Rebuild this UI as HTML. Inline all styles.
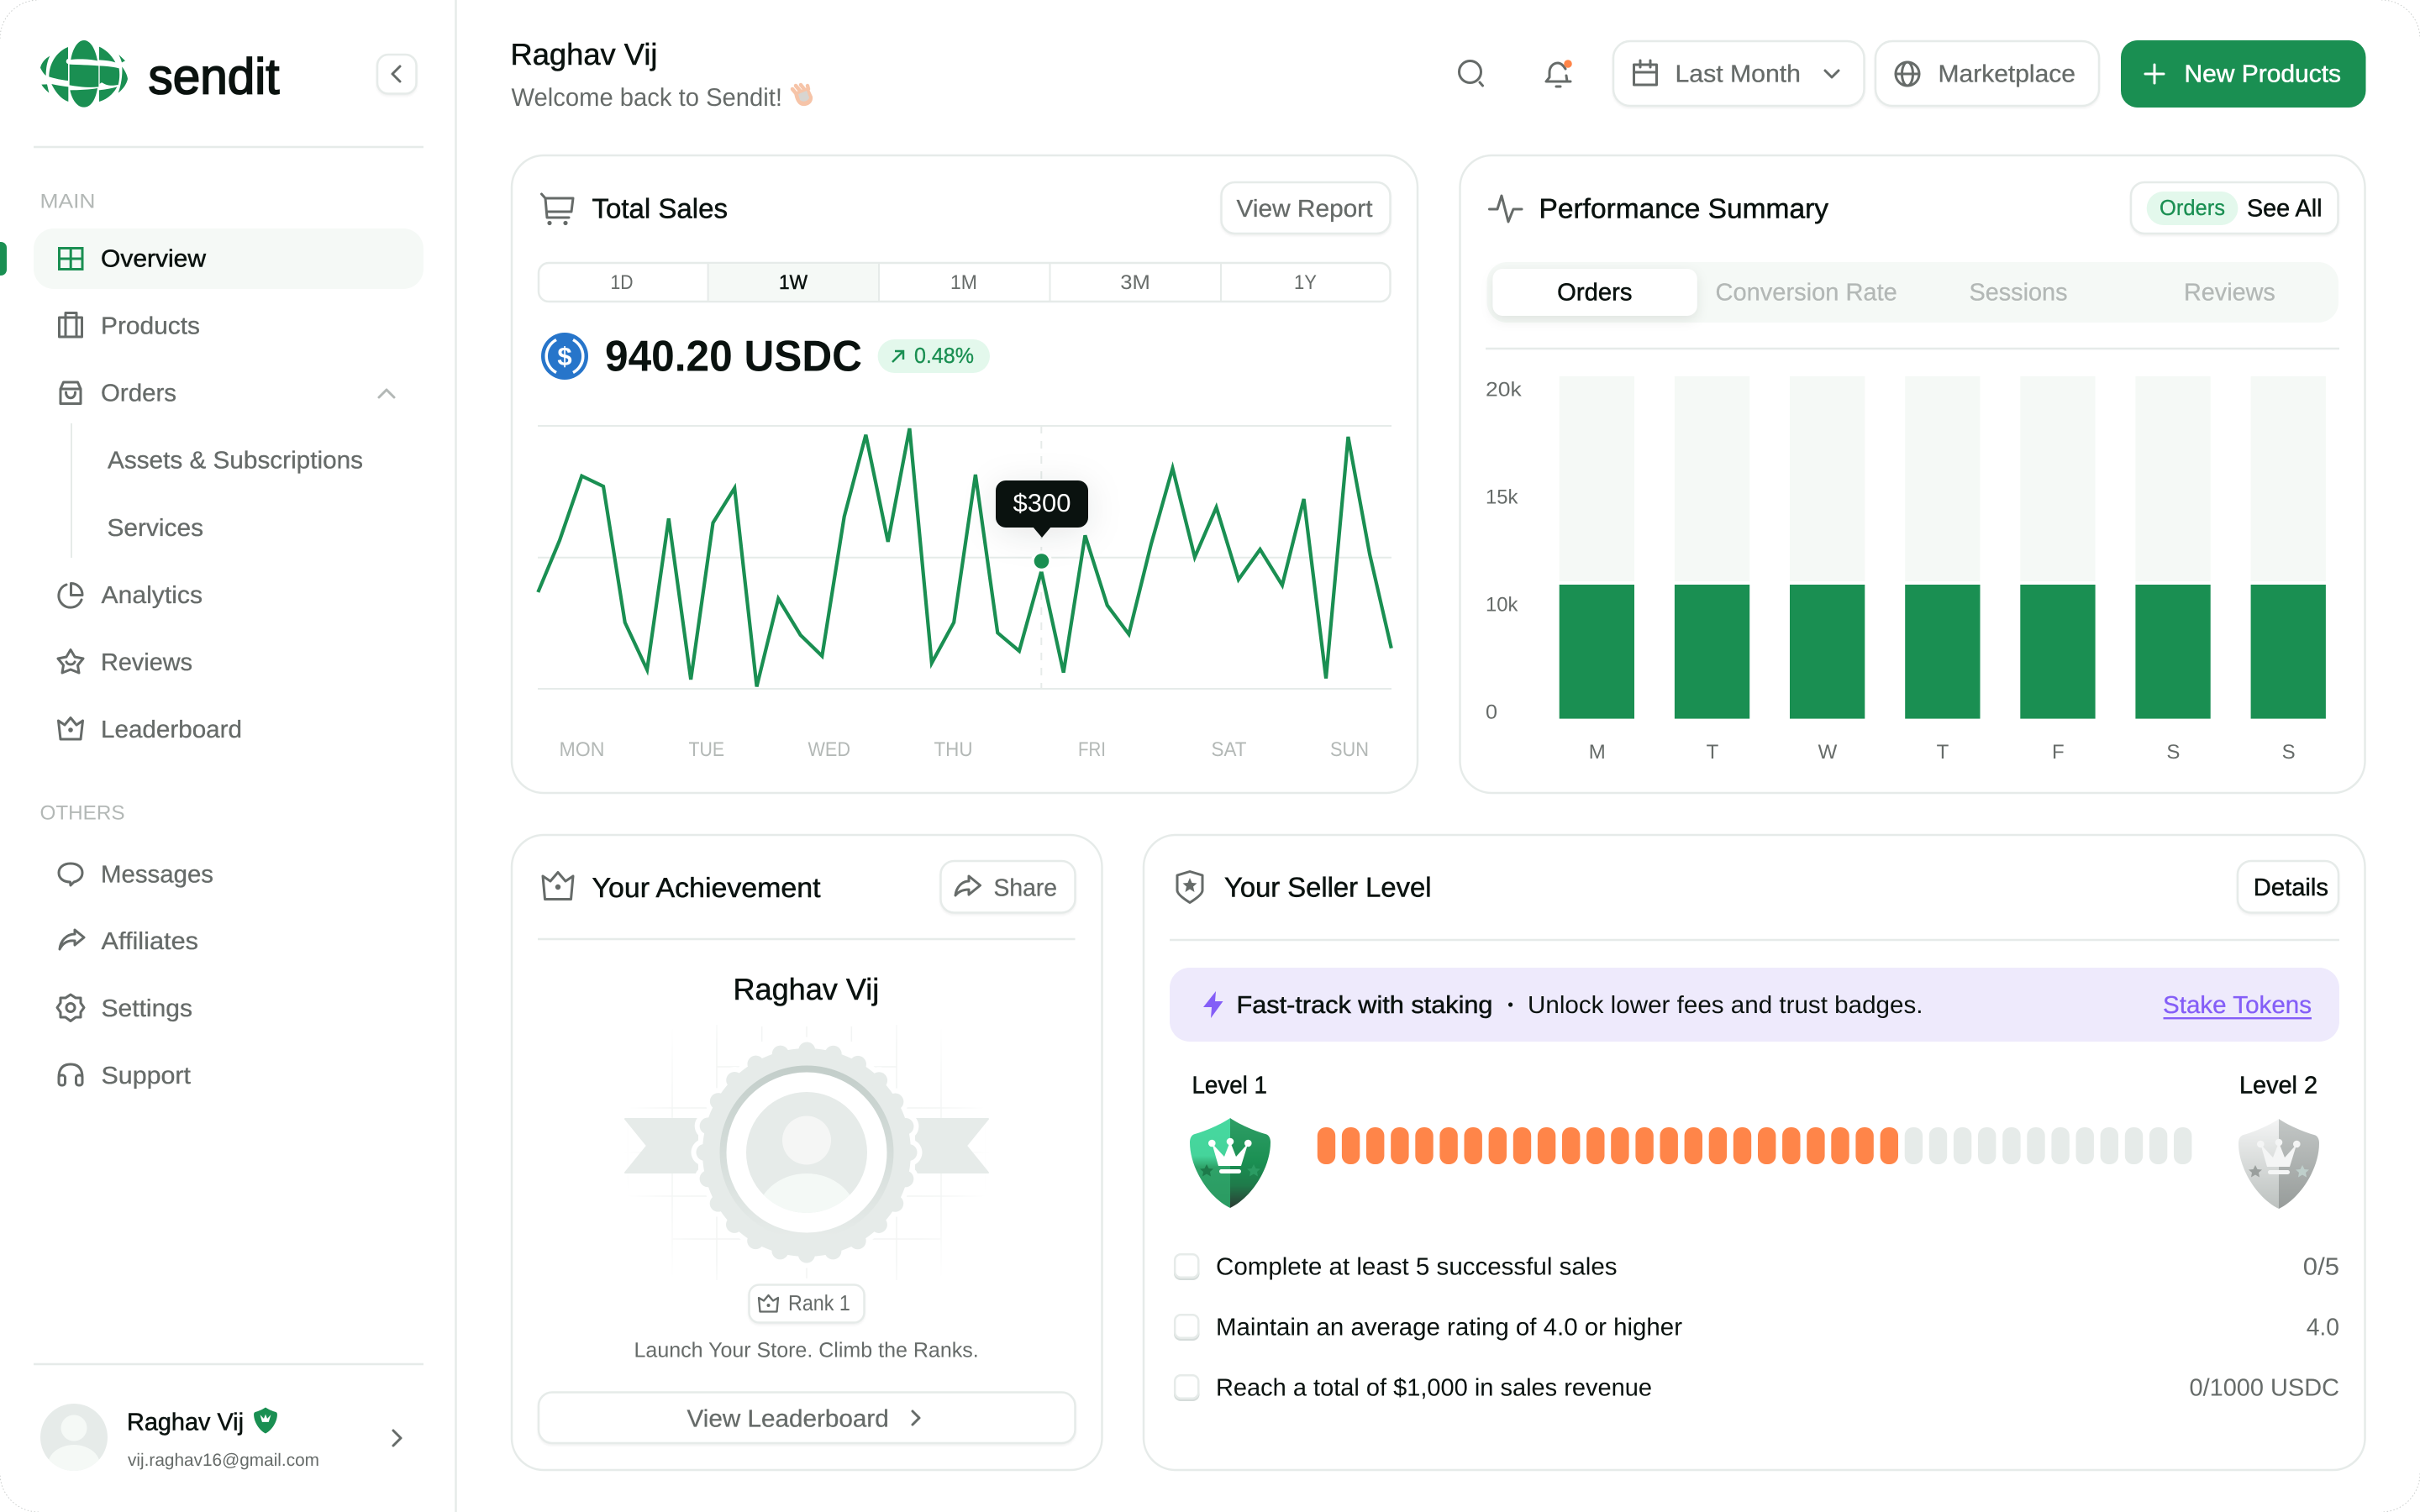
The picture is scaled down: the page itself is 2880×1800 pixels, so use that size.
<!DOCTYPE html>
<html lang="en">
<head>
<meta charset="utf-8">
<title>Sendit Dashboard</title>
<style>
html,body{margin:0;padding:0;background:#fff;width:2880px;height:1800px;overflow:hidden}
svg{display:block}
text{font-family:"Liberation Sans",sans-serif;font-size:29px;fill:#666b69;text-rendering:geometricPrecision}
.d{fill:#0a120f}
.g{fill:#666b69}
.l{fill:#b3b8b6}
.m{stroke:currentColor;stroke-width:.45px}
.dm{fill:#0a120f;stroke:#0a120f;stroke-width:.5px}
.gm{fill:#666b69;stroke:#666b69;stroke-width:.3px}
.t{font-size:33px}
.card{fill:#fff;stroke:#e6ebe9;stroke-width:2.5}
.btn{fill:#fff;stroke:#e6ebe9;stroke-width:2.5;filter:drop-shadow(0 2px 1px rgba(10,18,15,.05))}
.i{fill:none;stroke:#666b69;stroke-width:3;stroke-linejoin:round;stroke-linecap:round}
.sep{stroke:#e6ebe9;stroke-width:2.5}
.s24{font-size:24px}
.s26{font-size:26px}
.o{fill:#ff8549}
.e{fill:#e6ebe9}
</style>
</head>
<body>
<svg width="2880" height="1800" viewBox="0 0 2880 1800" xmlns="http://www.w3.org/2000/svg">
<defs>
<linearGradient id="lg1" x1="0" y1="0" x2="0" y2="1"><stop offset="0" stop-color="#47d9a0"/><stop offset=".42" stop-color="#45d49b"/><stop offset=".55" stop-color="#2ea268"/><stop offset="1" stop-color="#2a9a61"/></linearGradient>
<linearGradient id="lg2" x1="0" y1="0" x2="0" y2="1"><stop offset="0" stop-color="#2f9e66"/><stop offset=".5" stop-color="#1a8f52"/><stop offset=".75" stop-color="#1f7a4a"/><stop offset="1" stop-color="#2b3b34"/></linearGradient>
<linearGradient id="lg3" x1="0" y1="0" x2="0" y2="1"><stop offset="0" stop-color="#f4f5f5"/><stop offset="1" stop-color="#bcc1bf"/></linearGradient>
<linearGradient id="lg4" x1="0" y1="0" x2="0" y2="1"><stop offset="0" stop-color="#c3c7c6"/><stop offset="1" stop-color="#979c9a"/></linearGradient>
<linearGradient id="ring" x1="0" y1="0" x2="0" y2="1"><stop offset="0" stop-color="#c3ceca"/><stop offset="1" stop-color="#e6ebe9"/></linearGradient>
<radialGradient id="fade" gradientUnits="userSpaceOnUse" cx="960" cy="1372" r="220"><stop offset="0" stop-color="#eef1f0"/><stop offset=".75" stop-color="#f3f5f4"/><stop offset="1" stop-color="#ffffff"/></radialGradient>
<clipPath id="avc"><circle cx="960" cy="1372" r="72"/></clipPath>
<clipPath id="avc2"><circle cx="88" cy="1711" r="40"/></clipPath>
</defs>

<!-- window corners -->
<path d="M0 46A46 46 0 0 1 46 0M2834 0A46 46 0 0 1 2880 46M2880 1754A46 46 0 0 1 2834 1800M46 1800A46 46 0 0 1 0 1754" fill="none" stroke="#c9cccb" stroke-width="1" stroke-dasharray="1.5 2.5"/>

<!-- SIDEBAR -->
<line x1="542.5" y1="0" x2="542.5" y2="1800" stroke="#e6ebe9" stroke-width="2.5"/>
<g fill="#1a8f52" transform="translate(20 20) scale(.3333)">
<path d="M240 84C265 84 282 120 288 157C260 150 215 150 193 153C198 120 215 84 240 84Z"/>
<path d="M188 170C220 172 260 172 292 175L292 250C258 254 220 250 188 244Z"/>
<path d="M190 262C220 262 260 260 288 255C282 295 265 323 240 323C215 323 197 295 190 262Z"/>
<path d="M183 108L183 150C174 153 174 166 183 168L183 228C160 226 135 220 115 214C115 170 140 125 183 108Z"/>
<path d="M118 140C100 150 88 165 84 182C90 195 97 205 104 210C104 185 108 160 118 140Z"/>
<path d="M124 240C145 245 165 248 184 250L184 303C160 295 138 270 124 240Z"/>
<path d="M88 242L108 241L115 272C103 262 94 252 88 242Z"/>
<path d="M294 107C320 118 340 140 352 163C335 158 315 155 294 154Z"/>
<path d="M364 135L387 157L375 163C372 153 368 143 364 135Z"/>
<path d="M296 175C320 176 345 179 365 184C368 205 367 225 362 243C345 246 325 248 308 237C302 233 300 236 296 240Z"/>
<path d="M376 178C388 195 395 210 396 222C392 240 380 258 362 272C372 245 378 210 376 178Z"/>
<path d="M294 262C315 260 340 255 358 250C345 275 322 295 294 303Z"/>
</g>
<text x="176.5" y="111.5" textLength="156" lengthAdjust="spacingAndGlyphs" style="font-size:60px;fill:#0a120f;stroke:#0a120f;stroke-width:1.7px">sendit</text>
<rect class="btn" x="449" y="65" width="46.5" height="46.5" rx="13"/>
<path class="i" d="M476 79L467 88L476 97"/>
<line class="sep" x1="40" y1="175" x2="504" y2="175"/>

<text x="47.5" y="247.5" textLength="66" lengthAdjust="spacingAndGlyphs" class="l s24">MAIN</text>
<path d="M0 288H1A7 7 0 0 1 8 295V321A7 7 0 0 1 1 328H0Z" fill="#1a8f52"/>
<rect x="40" y="272" width="464" height="72" rx="24" fill="#f5f9f6"/>
<g fill="none" stroke="#1a8f52" stroke-width="3"><rect x="70.5" y="295.5" width="27.5" height="25"/><path d="M84.2 295.5V320.5M70.5 308H98"/></g>
<text x="120" y="317.5" textLength="125" lengthAdjust="spacingAndGlyphs" class="dm">Overview</text>

<g class="i"><rect x="70.5" y="378" width="27" height="23"/><path d="M78 401V372.5H91V401"/></g>
<text x="120" y="397.5" textLength="118" lengthAdjust="spacingAndGlyphs" class="gm">Products</text>

<g class="i"><path d="M72 463L75.5 455H92.5L96 463V480.5H72ZM72 463H96"/><path d="M78.5 467C78.5 476 89.5 476 89.5 467"/></g>
<text x="120" y="477.5" textLength="90" lengthAdjust="spacingAndGlyphs" class="gm">Orders</text>
<path d="M451 473L460 464L469 473" fill="none" stroke="#b3b8b6" stroke-width="3" stroke-linecap="round" stroke-linejoin="round"/>

<line x1="85" y1="504" x2="85" y2="664" stroke="#e6ebe9" stroke-width="2"/>
<text x="128" y="557.5" textLength="304" lengthAdjust="spacingAndGlyphs" class="gm">Assets &amp; Subscriptions</text>
<text x="127.5" y="638" textLength="114.5" lengthAdjust="spacingAndGlyphs" class="gm">Services</text>

<g class="i"><path d="M84.5 694.5V708.5H98A13.5 13.5 0 0 0 84.5 694.5Z"/><path d="M79 696A14 14 0 1 0 97 714"/></g>
<text x="120.5" y="718" textLength="120.5" lengthAdjust="spacingAndGlyphs" class="gm">Analytics</text>

<g class="i"><path d="M84 773.5L89 782L99 784L92.5 792L94 801L84 797L74 801L75.5 792L69 784L79 782Z"/><path d="M79 788C81 792 87 792 89 788"/></g>
<text x="120" y="798" textLength="109" lengthAdjust="spacingAndGlyphs" class="gm">Reviews</text>

<g class="i"><path d="M84 854.5L91 863L98.5 858L96 880H72L69.5 858L77 863Z"/></g>
<circle cx="84" cy="869" r="2.8" fill="#666b69"/>
<text x="120" y="878" textLength="168" lengthAdjust="spacingAndGlyphs" class="gm">Leaderboard</text>

<text x="47.5" y="975.5" textLength="101" lengthAdjust="spacingAndGlyphs" class="l s24">OTHERS</text>

<g class="i"><path d="M84 1028C93 1028 98 1033 98 1039C98 1046 92 1049 88 1050L84 1054L83.5 1050C76 1050 70 1046 70 1039C70 1033 75 1028 84 1028Z"/></g>
<text x="120" y="1050.5" textLength="134" lengthAdjust="spacingAndGlyphs" class="gm">Messages</text>

<g class="i"><path d="M89 1107L100 1116L89 1125V1120C81 1119 75 1122 71 1130C72 1120 79 1112 89 1112Z"/></g>
<text x="120.5" y="1130" textLength="115.5" lengthAdjust="spacingAndGlyphs" class="gm">Affiliates</text>

<g class="i"><path d="M84 1184L90 1188H96V1194L100 1199.5L96 1205V1211H90L84 1215.5L78 1211H72V1205L68 1199.5L72 1194V1188H78Z"/><circle cx="84" cy="1199.5" r="5"/></g>
<text x="120.5" y="1210" textLength="108.5" lengthAdjust="spacingAndGlyphs" class="gm">Settings</text>

<g class="i"><path d="M70 1283C70 1272 75 1267 84 1267C93 1267 98 1272 98 1283"/><rect x="70" y="1280" width="7.5" height="12" rx="3"/><rect x="90.5" y="1280" width="7.5" height="12" rx="3"/></g>
<text x="120.5" y="1290" textLength="106.5" lengthAdjust="spacingAndGlyphs" class="gm">Support</text>

<line class="sep" x1="40" y1="1624" x2="504" y2="1624"/>
<circle cx="88" cy="1711" r="40" fill="#e6ebe9"/>
<g clip-path="url(#avc2)" fill="#f5f9f6"><circle cx="88" cy="1700" r="15.5"/><ellipse cx="88" cy="1744" rx="31" ry="24"/></g>
<text x="151" y="1702.5" textLength="139" lengthAdjust="spacingAndGlyphs" class="dm">Raghav Vij</text>
<g transform="translate(316 1675.5) scale(.29)">
<path d="M0 0C10 7 28 15 42 19C46 20 48 24 48 29C48 60 25 95 0 107C-25 95 -48 60 -48 29C-48 24 -46 20 -42 19C-28 15 -10 7 0 0Z" fill="#1a8f52"/>
<path d="M-22 30L-7 46L0 28L7 46L22 30L13 60H-14Z" fill="#fff"/>
</g>
<text x="152" y="1745" textLength="228" lengthAdjust="spacingAndGlyphs" style="font-size:21px">vij.raghav16@gmail.com</text>
<path class="i" d="M468 1703L477 1712L468 1721"/>

<!-- HEADER -->
<text x="607.5" y="77" textLength="175" lengthAdjust="spacingAndGlyphs" class="dm" style="font-size:36px">Raghav Vij</text>
<text x="608.5" y="126" textLength="322.5" lengthAdjust="spacingAndGlyphs" style="font-size:30px">Welcome back to Sendit!</text>
<g stroke="#f6c4a8" stroke-width="4.5" stroke-linecap="round" fill="none">
<path d="M948 112L943 106M952 108L947 102M957 106L953 101M962 106L961 102"/>
</g>
<path d="M945 110L962 104L967 115C968 122 962 127 955 126C949 125 946 118 945 110Z" fill="#f6c4a8"/>
<path d="M950 112L960 108L963 116C962 121 955 122 952 119Z" fill="#d8d5d1"/>

<circle class="i" cx="1749.5" cy="85.5" r="13"/>
<path class="i" d="M1761 98L1764.5 102"/>

<g class="i"><path d="M1863 82C1860 77 1857 75 1854 75C1848 75 1844 80 1844 86V92L1840 97H1869M1865 97L1864 90"/><path d="M1852 103H1857"/></g>
<circle cx="1866" cy="76" r="4.8" fill="#ff8549"/>

<rect class="btn" x="1920" y="49" width="298.5" height="77" rx="20"/>
<g class="i"><rect x="1944.5" y="77" width="27" height="24"/><path d="M1944.5 86H1971.5M1952 72V80M1964 72V80"/></g>
<text x="1993.5" y="97.7" textLength="149.5" lengthAdjust="spacingAndGlyphs" class="gm">Last Month</text>
<path class="i" d="M2172 84L2180 92L2188 84"/>

<rect class="btn" x="2232" y="49" width="266" height="77" rx="20"/>
<g class="i"><circle cx="2270" cy="88" r="14"/><ellipse cx="2270" cy="88" rx="6.5" ry="14"/><path d="M2256 88H2284"/></g>
<text x="2306.5" y="97.7" textLength="163.5" lengthAdjust="spacingAndGlyphs" class="gm">Marketplace</text>

<rect x="2524" y="48" width="291.5" height="80" rx="20" fill="#1a8f52"/>
<path d="M2564 77V99M2553 88H2575" stroke="#fff" stroke-width="3" stroke-linecap="round"/>
<text x="2599.5" y="97.7" textLength="186.5" lengthAdjust="spacingAndGlyphs" style="fill:#fff;stroke:#fff;stroke-width:.5px">New Products</text>

<!-- TOTAL SALES -->
<rect class="card" x="609" y="185" width="1078" height="759" rx="38"/>
<g class="i"><path d="M644.5 231L649 236L651 259H677"/><path d="M649 236H682L680 252H651"/></g>
<circle cx="654" cy="265.5" r="2.6" fill="#666b69"/><circle cx="673" cy="265.5" r="2.6" fill="#666b69"/>
<text x="704.5" y="259.5" textLength="161.5" lengthAdjust="spacingAndGlyphs" class="dm t">Total Sales</text>
<rect class="btn" x="1453.5" y="217" width="201" height="61" rx="16"/>
<text x="1471.5" y="258" textLength="162" lengthAdjust="spacingAndGlyphs" class="gm">View Report</text>

<rect x="641" y="313" width="1013.5" height="46" rx="12" fill="#fff" stroke="#e6ebe9" stroke-width="2.5"/>
<rect x="842.6" y="314" width="203.4" height="44" fill="#f5f9f6"/>
<path d="M842.6 313V359M1046 313V359M1249.5 313V359M1453 313V359" stroke="#e6ebe9" stroke-width="2"/>
<g>
<text class="g s24" x="740" y="344" text-anchor="middle" textLength="27" lengthAdjust="spacingAndGlyphs">1D</text>
<text class="dm s24" x="944" y="344" text-anchor="middle" textLength="34" lengthAdjust="spacingAndGlyphs">1W</text>
<text class="g s24" x="1147" y="344" text-anchor="middle" textLength="32" lengthAdjust="spacingAndGlyphs">1M</text>
<text class="g s24" x="1351" y="344" text-anchor="middle" textLength="35.5" lengthAdjust="spacingAndGlyphs">3M</text>
<text class="g s24" x="1553.5" y="344" text-anchor="middle" textLength="27" lengthAdjust="spacingAndGlyphs">1Y</text>
</g>

<circle cx="672" cy="424" r="28" fill="#2775ca"/>
<path d="M662 404.5A22 22 0 0 0 662 443.5M682 404.5A22 22 0 0 1 682 443.5" fill="none" stroke="#fff" stroke-width="3.5"/>
<text x="672" y="435" text-anchor="middle" font-weight="700" style="font-size:31px;fill:#fff">$</text>
<text x="720" y="441.7" textLength="306" lengthAdjust="spacingAndGlyphs" font-weight="700" class="d" style="font-size:52px">940.20 USDC</text>
<rect x="1044.6" y="404" width="133.4" height="40" rx="20" fill="#e3f8ec"/>
<path d="M1062 431L1075 418M1065 418H1075V428" fill="none" stroke="#1a8f52" stroke-width="2.5"/>
<text x="1088" y="432" textLength="71" lengthAdjust="spacingAndGlyphs" class="s26" style="fill:#1a8f52;stroke:#1a8f52;stroke-width:.3px">0.48%</text>

<path d="M640 507H1656M640 663.7H1656M640 820H1656" stroke="#e6ebe9" stroke-width="2"/>
<line x1="1239.3" y1="507" x2="1239.3" y2="820" stroke="#e6ebe9" stroke-width="2" stroke-dasharray="9 9"/>
<polyline fill="none" stroke="#1a8f52" stroke-width="4.2" stroke-linejoin="miter" vector-effect="non-scaling-stroke" transform="translate(620 480) scale(.6761 .33333)" points="30,675 68,490 107,260 145,297 183,783 222,952 260,412 299,987 338,427 376,303 415,1012 453,698 492,828 530,903 569,405 607,113 646,495 684,90 723,928 762,783 800,255 839,820 877,885 916,600 955,962 993,472 1032,722 1070,825 1109,505 1147,232 1186,550 1224,372 1263,630 1301,522 1340,650 1378,342 1417,983 1456,120 1494,540 1532,875"/>
<circle cx="1239.5" cy="668" r="12.5" fill="#fff"/>
<circle cx="1239.5" cy="668" r="8.8" fill="#1a8f52"/>
<g style="filter:drop-shadow(0 6px 20px rgba(10,18,15,.10))">
<rect x="1185" y="572" width="110" height="56" rx="12" fill="#0a120f"/>
<path d="M1229 627H1251L1240 640Z" fill="#0a120f"/>
</g>
<text x="1205.5" y="609" textLength="69" lengthAdjust="spacingAndGlyphs" style="fill:#fff;font-size:30px">$300</text>
<g>
<text class="l s24" x="665.5" y="900" textLength="54" lengthAdjust="spacingAndGlyphs">MON</text>
<text class="l s24" x="819.5" y="900" textLength="42.5" lengthAdjust="spacingAndGlyphs">TUE</text>
<text class="l s24" x="961.5" y="900" textLength="50.5" lengthAdjust="spacingAndGlyphs">WED</text>
<text class="l s24" x="1111.5" y="900" textLength="46" lengthAdjust="spacingAndGlyphs">THU</text>
<text class="l s24" x="1283" y="900" textLength="33" lengthAdjust="spacingAndGlyphs">FRI</text>
<text class="l s24" x="1441.5" y="900" textLength="42" lengthAdjust="spacingAndGlyphs">SAT</text>
<text class="l s24" x="1583" y="900" textLength="46" lengthAdjust="spacingAndGlyphs">SUN</text>
</g>

<!-- PERFORMANCE -->
<rect class="card" x="1737.5" y="185" width="1077" height="759" rx="38"/>
<path class="i" d="M1772.5 249H1782L1787 233L1795 264L1801 249H1811"/>
<text x="1831.5" y="259.3" textLength="344.5" lengthAdjust="spacingAndGlyphs" class="dm t">Performance Summary</text>
<rect class="btn" x="2536" y="217" width="246.5" height="61" rx="16"/>
<rect x="2554.7" y="228" width="108.7" height="40" rx="20" fill="#e3f8ec"/>
<text x="2570" y="256" textLength="78" lengthAdjust="spacingAndGlyphs" class="s26" style="fill:#1a8f52;stroke:#1a8f52;stroke-width:.3px">Orders</text>
<text x="2674" y="257.7" textLength="89.5" lengthAdjust="spacingAndGlyphs" class="dm">See All</text>

<rect x="1769.5" y="312" width="1013.5" height="72" rx="24" fill="#f5f9f6"/>
<rect x="1776.4" y="320" width="243.4" height="56" rx="12" fill="#fff" style="filter:drop-shadow(0 5px 7px rgba(10,18,15,.09))"/>
<text x="1853.2" y="357.7" textLength="89.3" lengthAdjust="spacingAndGlyphs" class="dm">Orders</text>
<text x="2041.5" y="357.7" textLength="216.3" lengthAdjust="spacingAndGlyphs" class="l" style="stroke:#b3b8b6;stroke-width:.3px">Conversion Rate</text>
<text x="2343.5" y="357.7" textLength="117" lengthAdjust="spacingAndGlyphs" class="l" style="stroke:#b3b8b6;stroke-width:.3px">Sessions</text>
<text x="2599" y="357.7" textLength="108.8" lengthAdjust="spacingAndGlyphs" class="l" style="stroke:#b3b8b6;stroke-width:.3px">Reviews</text>
<line class="sep" x1="1768" y1="415" x2="2784" y2="415"/>

<g fill="#f5f9f6">
<rect x="1855.7" y="448" width="89.3" height="244"/><rect x="1992.9" y="448" width="89.3" height="244"/><rect x="2130" y="448" width="89.3" height="244"/><rect x="2267.2" y="448" width="89.3" height="244"/><rect x="2404.3" y="448" width="89.3" height="244"/><rect x="2541.4" y="448" width="89.3" height="244"/><rect x="2678.6" y="448" width="89.3" height="244"/>
</g>
<g fill="#1a8f52">
<rect x="1855.7" y="696" width="89.3" height="159.6"/><rect x="1992.9" y="696" width="89.3" height="159.6"/><rect x="2130" y="696" width="89.3" height="159.6"/><rect x="2267.2" y="696" width="89.3" height="159.6"/><rect x="2404.3" y="696" width="89.3" height="159.6"/><rect x="2541.4" y="696" width="89.3" height="159.6"/><rect x="2678.6" y="696" width="89.3" height="159.6"/>
</g>
<text class="s24" x="1768" y="471.3" textLength="42.7" lengthAdjust="spacingAndGlyphs">20k</text>
<text class="s24" x="1768" y="599.7" textLength="38.4" lengthAdjust="spacingAndGlyphs">15k</text>
<text class="s24" x="1768" y="727.5" textLength="38.4" lengthAdjust="spacingAndGlyphs">10k</text>
<text class="s24" x="1768" y="855.3" textLength="14" lengthAdjust="spacingAndGlyphs">0</text>
<text class="s24" x="1900.7" y="902.8" text-anchor="middle">M</text>
<text class="s24" x="2037.9" y="902.8" text-anchor="middle">T</text>
<text class="s24" x="2175" y="902.8" text-anchor="middle">W</text>
<text class="s24" x="2312" y="902.8" text-anchor="middle">T</text>
<text class="s24" x="2449.3" y="902.8" text-anchor="middle">F</text>
<text class="s24" x="2586.4" y="902.8" text-anchor="middle">S</text>
<text class="s24" x="2723.6" y="902.8" text-anchor="middle">S</text>

<!-- ACHIEVEMENT -->
<rect class="card" x="609" y="994" width="702.5" height="756" rx="38"/>
<g class="i"><path d="M664 1038.5L673 1049L682 1043L679.5 1070.5H648.5L646 1043L655 1049Z"/></g>
<circle cx="664" cy="1056" r="3.2" fill="#666b69"/>
<text x="704.5" y="1067.8" textLength="272" lengthAdjust="spacingAndGlyphs" class="dm t">Your Achievement</text>
<rect class="btn" x="1119.5" y="1025" width="160" height="61.5" rx="16"/>
<g class="i"><path d="M1153 1043L1166.5 1054L1153 1065V1059C1147 1059 1141 1061 1137 1066C1138 1056 1145 1049 1153 1049Z"/></g>
<text x="1182.5" y="1066.7" textLength="75.5" lengthAdjust="spacingAndGlyphs" class="gm">Share</text>
<line class="sep" x1="640" y1="1118" x2="1279.5" y2="1118"/>
<text x="872.5" y="1190" textLength="173.8" lengthAdjust="spacingAndGlyphs" class="dm" style="font-size:36px">Raghav Vij</text>

<!-- badge -->
<g fill="none" stroke="url(#fade)" stroke-width="1.5">
<path d="M747 1240V1503M800 1220V1524M853 1220V1524M1067 1220V1524M1120 1220V1524M1173 1240V1503M960 1222V1240M960 1504V1522M906.7 1222V1240M1013.3 1222V1240"/>
<path d="M740 1319H1180M740 1372H1180M740 1424H1180M800 1475H1120M853 1270H1067"/>
</g>
<path d="M744 1332H830V1396H744L770 1364Z" fill="#e6ebe9" stroke="#e6ebe9" stroke-width="2" stroke-linejoin="round"/>
<path d="M1176 1332H1090V1396H1176L1150 1364Z" fill="#e6ebe9" stroke="#e6ebe9" stroke-width="2" stroke-linejoin="round"/>
<circle cx="960" cy="1372" r="121.5" fill="none" stroke="#fff" stroke-width="32" stroke-linecap="round" stroke-dasharray="0 31.809"/>
<circle cx="960" cy="1372" r="130" fill="#fff"/>
<circle cx="960" cy="1372" r="124" fill="#e6ebe9"/>
<circle cx="960" cy="1372" r="121.5" fill="none" stroke="#e6ebe9" stroke-width="20" stroke-linecap="round" stroke-dasharray="0 31.809"/>
<circle cx="960" cy="1372" r="99.5" fill="#fff" stroke="url(#ring)" stroke-width="8"/>
<circle cx="960" cy="1372" r="72" fill="#e6ebe9"/>
<g clip-path="url(#avc)"><ellipse cx="960" cy="1357.5" rx="29" ry="29" fill="#f5f6f5"/><ellipse cx="960" cy="1450" rx="60" ry="53" fill="#f4f9f6"/></g>

<rect class="btn" x="891.5" y="1529.5" width="137" height="45" rx="12"/>
<g fill="none" stroke="#666b69" stroke-width="2.3" stroke-linejoin="round"><path d="M914.5 1542L920 1548.5L926 1545L924.5 1561.5H904.5L903 1545L909 1548.5Z"/></g>
<circle cx="914.5" cy="1554" r="2" fill="#666b69"/>
<text x="938" y="1560.2" textLength="73.8" lengthAdjust="spacingAndGlyphs" class="s26">Rank 1</text>
<text x="754.5" y="1615.7" textLength="410.2" lengthAdjust="spacingAndGlyphs" style="font-size:25px">Launch Your Store. Climb the Ranks.</text>
<rect class="btn" x="641" y="1657.5" width="638.5" height="60.5" rx="16"/>
<text x="817.5" y="1698.4" textLength="240.3" lengthAdjust="spacingAndGlyphs" class="gm">View Leaderboard</text>
<path class="i" d="M1086 1680L1094 1688L1086 1696"/>

<!-- SELLER LEVEL -->
<rect class="card" x="1361" y="994" width="1453.5" height="756" rx="38"/>
<g class="i"><path d="M1416 1037.5L1431 1042V1060C1431 1065 1420 1072 1416 1074.5C1412 1072 1401 1065 1401 1060V1042Z"/></g>
<polygon points="1416,1045 1418.5,1051 1424.5,1051.5 1420,1055.5 1421.5,1062 1416,1058.5 1410.5,1062 1412,1055.5 1407.5,1051.5 1413.5,1051" fill="#666b69"/>
<text x="1457" y="1067.3" textLength="246.5" lengthAdjust="spacingAndGlyphs" class="dm t">Your Seller Level</text>
<rect class="btn" x="2663" y="1025" width="120" height="61.5" rx="16"/>
<text x="2681.8" y="1066" textLength="89.2" lengthAdjust="spacingAndGlyphs" class="dm">Details</text>
<line class="sep" x1="1392" y1="1119" x2="2784" y2="1119"/>

<rect x="1392" y="1152" width="1392" height="88" rx="24" fill="#eeeafc"/>
<path d="M1447 1180L1432 1199H1442L1441 1212L1455.5 1192H1446Z" fill="#845ef7"/>
<text x="1471.5" y="1206" textLength="305" lengthAdjust="spacingAndGlyphs" class="dm">Fast-track with staking</text>
<circle cx="1797.6" cy="1196" r="2.6" fill="#0a120f"/>
<text x="1818" y="1206" textLength="470.5" lengthAdjust="spacingAndGlyphs" class="d">Unlock lower fees and trust badges.</text>
<text x="2574" y="1206" textLength="177" lengthAdjust="spacingAndGlyphs" style="fill:#845ef7;stroke:#845ef7;stroke-width:.3px">Stake Tokens</text>
<rect x="2574.5" y="1211" width="176.5" height="2.4" fill="#845ef7"/>

<text x="1418.5" y="1301.7" textLength="89.5" lengthAdjust="spacingAndGlyphs" class="dm">Level 1</text>
<text x="2665" y="1301.7" textLength="93" lengthAdjust="spacingAndGlyphs" class="dm">Level 2</text>

<g transform="translate(1464 1331)">
<path d="M0 0C-10 7 -28 15 -42 19C-46 20 -48 24 -48 29C-48 60 -25 95 0 107Z" fill="url(#lg1)"/>
<path d="M0 0C10 7 28 15 42 19C46 20 48 24 48 29C48 60 25 95 0 107Z" fill="url(#lg2)"/>
<polygon points="-28,62 -25.5,67 -20,67.5 -24,71 -23,76.5 -28,73.5 -33,76.5 -32,71 -36,67.5 -30.5,67" fill="#1d7a4a" transform="translate(0 -7)"/>
<polygon points="28,62 30.5,67 36,67.5 32,71 33,76.5 28,73.5 23,76.5 24,71 20,67.5 25.5,67" fill="#2b9c63" transform="translate(0 -7)"/>
<g fill="#fff"><circle cx="-21.7" cy="30" r="4.3"/><circle cx="0" cy="28" r="4.3"/><circle cx="21.3" cy="30" r="4.3"/><path d="M-21.7 30L-7 46L0 28L7 46L21.3 30L13 57H-14Z"/><rect x="-13" y="61" width="26" height="5" rx="2.5"/></g>
</g>
<g transform="translate(2712 1332)">
<path d="M0 0C-10 7 -28 15 -42 19C-46 20 -48 24 -48 29C-48 60 -25 95 0 107Z" fill="url(#lg3)"/>
<path d="M0 0C10 7 28 15 42 19C46 20 48 24 48 29C48 60 25 95 0 107Z" fill="url(#lg4)"/>
<polygon points="-28,62 -25.5,67 -20,67.5 -24,71 -23,76.5 -28,73.5 -33,76.5 -32,71 -36,67.5 -30.5,67" fill="#9a9f9d" transform="translate(0 -7)"/>
<polygon points="28,62 30.5,67 36,67.5 32,71 33,76.5 28,73.5 23,76.5 24,71 20,67.5 25.5,67" fill="#bfcfcb" transform="translate(0 -7)"/>
<g fill="#f4f5f5"><circle cx="-21.7" cy="30" r="4.3"/><circle cx="0" cy="28" r="4.3"/><circle cx="21.3" cy="30" r="4.3"/><path d="M-21.7 30L-7 46L0 28L7 46L21.3 30L13 57H-14Z"/><rect x="-13" y="61" width="26" height="5" rx="2.5"/></g>
</g>

<!-- progress -->
<g class="o">
<rect x="1567.8" y="1342" width="21.4" height="44" rx="10"/><rect x="1596.9" y="1342" width="21.4" height="44" rx="10"/><rect x="1626" y="1342" width="21.4" height="44" rx="10"/><rect x="1655.2" y="1342" width="21.4" height="44" rx="10"/><rect x="1684.3" y="1342" width="21.4" height="44" rx="10"/><rect x="1713.4" y="1342" width="21.4" height="44" rx="10"/><rect x="1742.5" y="1342" width="21.4" height="44" rx="10"/><rect x="1771.6" y="1342" width="21.4" height="44" rx="10"/><rect x="1800.8" y="1342" width="21.4" height="44" rx="10"/><rect x="1829.9" y="1342" width="21.4" height="44" rx="10"/><rect x="1859" y="1342" width="21.4" height="44" rx="10"/><rect x="1888.1" y="1342" width="21.4" height="44" rx="10"/><rect x="1917.2" y="1342" width="21.4" height="44" rx="10"/><rect x="1946.4" y="1342" width="21.4" height="44" rx="10"/><rect x="1975.5" y="1342" width="21.4" height="44" rx="10"/><rect x="2004.6" y="1342" width="21.4" height="44" rx="10"/><rect x="2033.7" y="1342" width="21.4" height="44" rx="10"/><rect x="2062.8" y="1342" width="21.4" height="44" rx="10"/><rect x="2092" y="1342" width="21.4" height="44" rx="10"/><rect x="2121.1" y="1342" width="21.4" height="44" rx="10"/><rect x="2150.2" y="1342" width="21.4" height="44" rx="10"/><rect x="2179.3" y="1342" width="21.4" height="44" rx="10"/><rect x="2208.4" y="1342" width="21.4" height="44" rx="10"/><rect x="2237.6" y="1342" width="21.4" height="44" rx="10"/>
</g>
<g class="e">
<rect x="2266.7" y="1342" width="21.4" height="44" rx="10"/><rect x="2295.8" y="1342" width="21.4" height="44" rx="10"/><rect x="2324.9" y="1342" width="21.4" height="44" rx="10"/><rect x="2354" y="1342" width="21.4" height="44" rx="10"/><rect x="2383.2" y="1342" width="21.4" height="44" rx="10"/><rect x="2412.3" y="1342" width="21.4" height="44" rx="10"/><rect x="2441.4" y="1342" width="21.4" height="44" rx="10"/><rect x="2470.5" y="1342" width="21.4" height="44" rx="10"/><rect x="2499.6" y="1342" width="21.4" height="44" rx="10"/><rect x="2528.8" y="1342" width="21.4" height="44" rx="10"/><rect x="2557.9" y="1342" width="21.4" height="44" rx="10"/><rect x="2587" y="1342" width="21.4" height="44" rx="10"/>
</g>

<!-- checklist -->
<g fill="#d5dcda"><rect x="1397" y="1494" width="30.5" height="30" rx="8"/><rect x="1397" y="1566" width="30.5" height="30" rx="8"/><rect x="1397" y="1638" width="30.5" height="30" rx="8"/></g>
<g fill="#fff" stroke="#e6ebe9" stroke-width="2.5"><rect x="1398.2" y="1493.2" width="28" height="27.5" rx="7"/><rect x="1398.2" y="1565.2" width="28" height="27.5" rx="7"/><rect x="1398.2" y="1637.2" width="28" height="27.5" rx="7"/></g>
<text x="1447" y="1517.7" textLength="477.5" lengthAdjust="spacingAndGlyphs" class="d">Complete at least 5 successful sales</text>
<text x="2740.8" y="1517.7" textLength="43.2" lengthAdjust="spacingAndGlyphs">0/5</text>
<text x="1447" y="1589.7" textLength="555" lengthAdjust="spacingAndGlyphs" class="d">Maintain an average rating of 4.0 or higher</text>
<text x="2744.7" y="1589.7" textLength="39.3" lengthAdjust="spacingAndGlyphs">4.0</text>
<text x="1447" y="1661.7" textLength="519" lengthAdjust="spacingAndGlyphs" class="d">Reach a total of $1,000 in sales revenue</text>
<text x="2605.5" y="1661.7" textLength="178.5" lengthAdjust="spacingAndGlyphs">0/1000 USDC</text>
</svg>
</body>
</html>
